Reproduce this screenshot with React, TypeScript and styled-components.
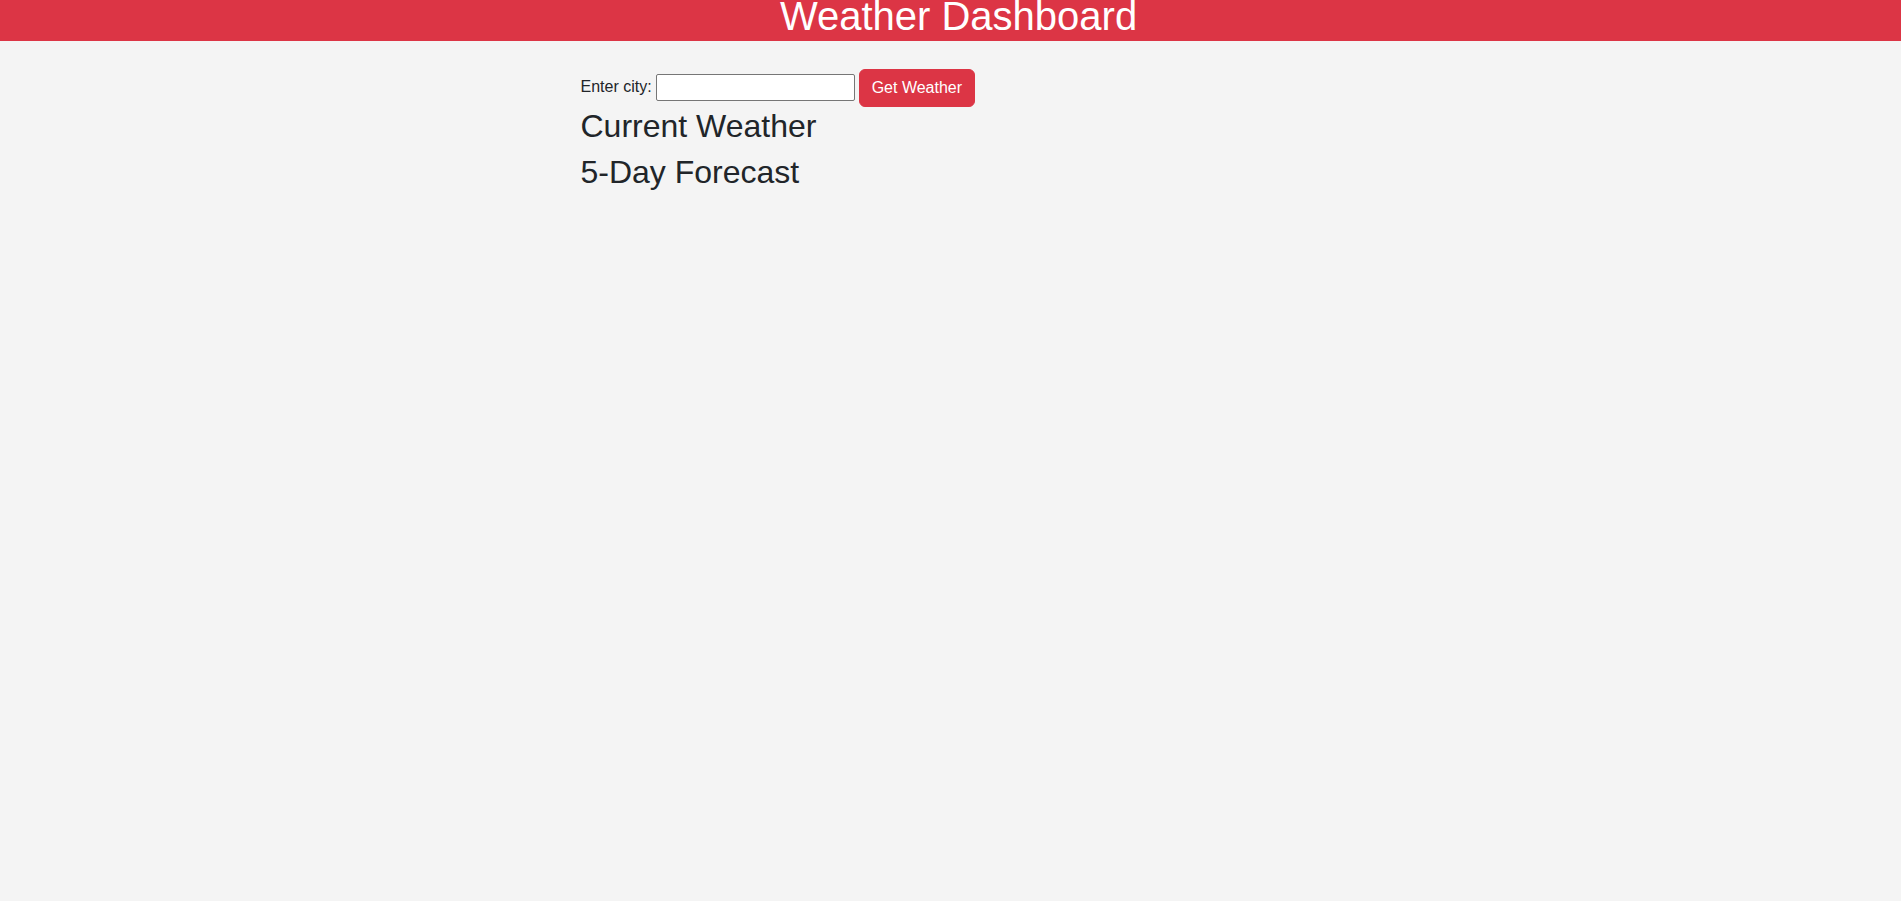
import React, { useState } from "react";
import styled, { createGlobalStyle } from "styled-components";

const GlobalStyle = createGlobalStyle`
    html, body {
        margin: 0;
        padding: 0;
        background-color: #f4f4f4;
        font-family: "Liberation Sans", Arial, sans-serif;
        color: #212529;
    }
    #root {
        min-height: 100vh;
    }
`;

export default function App() {
    const [city, setCity] = useState("");

    return (
        <>
            <GlobalStyle />
            <Header>
                <Title>Weather Dashboard</Title>
            </Header>
            <Main>
                <SearchRow>
                    <CityLabel htmlFor="city">Enter city:</CityLabel>
                    <CityInput
                        id="city"
                        type="text"
                        value={city}
                        onChange={(e) => setCity(e.target.value)}
                    />
                    <GetButton type="button">Get Weather</GetButton>
                </SearchRow>
                <SectionTitle>Current Weather</SectionTitle>
                <SectionTitle>5-Day Forecast</SectionTitle>
            </Main>
        </>
    );
}

const Header = styled.header`
    box-sizing: border-box;
    height: 41px;
    padding-left: 16px;
    background-color: #dc3545;
    text-align: center;
`;

const Title = styled.h1`
    margin: 0;
    font-size: 40px;
    font-weight: 400;
    line-height: 33px;
    color: #ffffff;
`;

const Main = styled.main`
    max-width: 740px;
    margin: 0 auto;
    padding-top: 28px;
`;

const SearchRow = styled.div`
    display: flex;
    align-items: center;
    height: 38px;
`;

const CityLabel = styled.label`
    font-size: 16px;
    line-height: 24px;
    margin-right: 4px;
    position: relative;
    top: -1px;
`;

const CityInput = styled.input`
    box-sizing: border-box;
    width: 199px;
    height: 27px;
    margin-top: -2px;
    padding: 1px 4px;
    border: 1px solid #767676;
    border-radius: 2px;
    background-color: #ffffff;
    font-family: inherit;
    font-size: 16px;
    outline: none;
`;

const GetButton = styled.button`
    box-sizing: border-box;
    height: 38px;
    margin-left: 4px;
    padding: 6px 12px;
    border: 1px solid #dc3545;
    border-radius: 6px;
    background-color: #dc3545;
    color: #ffffff;
    font-family: inherit;
    font-size: 16px;
    line-height: 24px;
    cursor: pointer;
`;

const SectionTitle = styled.h2`
    margin: 0 0 8px;
    font-size: 32px;
    font-weight: 400;
    line-height: 38px;
`;
